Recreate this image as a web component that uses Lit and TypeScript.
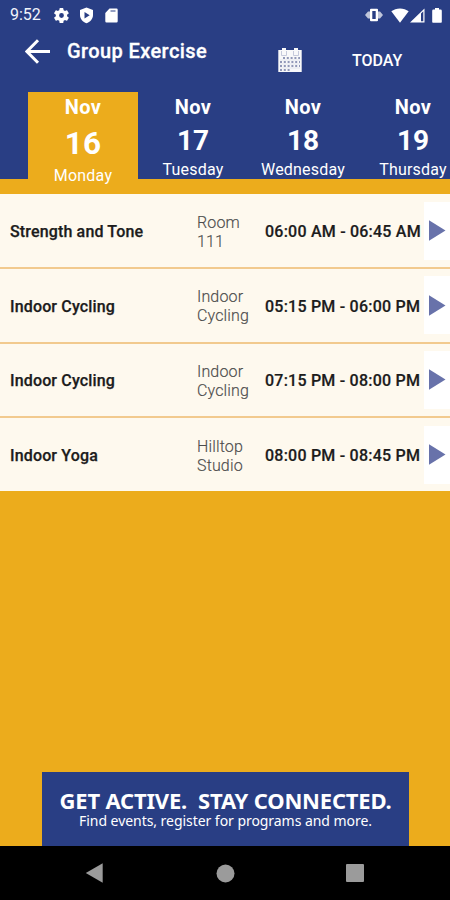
import { LitElement, html, css } from "lit";
import { customElement, state } from "lit/decorators.js";
import { classMap } from "lit/directives/class-map.js";

const days = [
  { month: "Nov", date: "16", name: "Monday" },
  { month: "Nov", date: "17", name: "Tuesday" },
  { month: "Nov", date: "18", name: "Wednesday" },
  { month: "Nov", date: "19", name: "Thursday" },
];

const classes = [
  { name: "Strength and Tone", room: ["Room", "111"], time: "06:00 AM - 06:45 AM" },
  { name: "Indoor Cycling", room: ["Indoor", "Cycling"], time: "05:15 PM - 06:00 PM" },
  { name: "Indoor Cycling", room: ["Indoor", "Cycling"], time: "07:15 PM - 08:00 PM" },
  { name: "Indoor Yoga", room: ["Hilltop", "Studio"], time: "08:00 PM - 08:45 PM" },
];

@customElement("status-bar")
class StatusBar extends LitElement {
  static styles = css`
    :host { display: flex; height: 30px; align-items: center; color: #f1f4fb; font-size: 16px; }
    .clock { width: 44px; padding-left: 10px; line-height: 30px; }
    svg { display: block; fill: #fff; }
    .shield { margin-left: 10px; }
    .card { margin-left: 11px; }
    .vibrate { margin-left: auto; }
    .wifi { margin-left: 8px; }
    .signal { margin-left: 1px; }
    .battery { margin: 0 8px 0 7px; }
  `;
  render() {
    return html`
      <div class="clock">9:52</div>
      <svg class="gear" width="15" height="15" viewBox="2 2 20 20"><path d="M19.4 13a7.500 7.500 0 0 0 0-2l2.100-1.600a.5.5 0 0 0 .1-.6l-2-3.500a.5.5 0 0 0-.6-.2l-2.500 1a7.300 7.300 0 0 0-1.700-1l-.4-2.600a.5.5 0 0 0-.5-.5h-4a.5.5 0 0 0-.5.500L9 5.100a7.300 7.300 0 0 0-1.700 1l-2.500-1a.5.5 0 0 0-.6.200l-2 3.500a.5.5 0 0 0 .1.600L4.500 11a7.500 7.500 0 0 0 0 2l-2.200 1.600a.5.5 0 0 0-.1.600l2 3.500c.1.200.4.300.6.200l2.500-1a7.300 7.300 0 0 0 1.700 1l.4 2.600c0 .3.200.500.500.500h4c.3 0 .5-.2.500-.5l.4-2.600a7.300 7.300 0 0 0 1.700-1l2.500 1c.2.100.5 0 .6-.2l2-3.500a.5.5 0 0 0-.1-.6zM12 15.200a3.200 3.200 0 1 1 0-6.400 3.200 3.200 0 0 1 0 6.400z"/></svg>
      <svg class="shield" width="15" height="17" viewBox="0 0 15 17"><path fill-rule="evenodd" d="M7.500 .5 14 3v5c0 4-3 7-6.500 8.200C4 15 1 12 1 8V3zM5.500 5v6.500L10.700 8.200z"/></svg>
      <svg class="card" width="13" height="15" viewBox="0 0 13 15"><path fill-rule="evenodd" d="M4.500.5H11.500a1.200 1.200 0 0 1 1.200 1.200v11.600a1.200 1.200 0 0 1-1.200 1.200H1.500A1.200 1.200 0 0 1 .3 13.300V5zM5.500 2.500v1h5v-1z"/></svg>
      <svg class="vibrate" width="18" height="14" viewBox="0 0 18 14"><path opacity=".7" d="M0 7l3-3.500h2v7H3zM18 7l-3-3.500h-2v7h2z"/><path fill-rule="evenodd" d="M6 .7h6a1 1 0 0 1 1 1v10.600a1 1 0 0 1-1 1H6a1 1 0 0 1-1-1V1.700a1 1 0 0 1 1-1zM7.300 3v8h3.400V3z"/></svg>
      <svg class="wifi" width="18" height="15" viewBox="0 0 18 15"><path d="M9 14.800.3 3.300C5-.6 13-.6 17.700 3.300z"/></svg>
      <svg class="signal" width="15" height="15" viewBox="0 0 15 15"><path fill-rule="evenodd" d="M14.500.5v14H0zM11 5.500v7.800h2.300V3.200z"/></svg>
      <svg class="battery" width="10" height="15" viewBox="0 0 10 15"><path d="M3 0h4v1.500h1.500a1.300 1.300 0 0 1 1.300 1.300V14a.8.8 0 0 1-.8.800H1a.8.8 0 0 1-.8-.8V2.800a1.300 1.300 0 0 1 1.300-1.300H3z"/></svg>
    `;
  }
}

@customElement("day-tab")
class DayTab extends LitElement {
  static properties = { day: { attribute: false }, active: { type: Boolean } };
  declare day: { month: string; date: string; name: string };
  declare active: boolean;
  static styles = css`
    :host { display: block; flex: none; width: 110px; }
    .tab { box-sizing: border-box; height: 102px; padding-top: 3px; text-align: center; color: #fff; }
    .active { background: #ecac1c; }
    .month { font-size: 20px; font-weight: 700; line-height: 24px; letter-spacing: 0.3px; }
    .date { font-size: 28px; font-weight: 700; line-height: 32px; margin-top: 6px; }
    .name { font-size: 16px; line-height: 20px; margin-top: 3px; letter-spacing: 0.2px; white-space: nowrap; }
    .active .date { font-size: 31.500px; line-height: 36px; margin-top: 7px; letter-spacing: 0.3px; }
    .active .name { margin-top: 4px; }
  `;
  render() {
    return html`<div class=${classMap({ tab: true, active: this.active })}>
      <div class="month">${this.day.month}</div>
      <div class="date">${this.day.date}</div>
      <div class="name">${this.day.name}</div>
    </div>`;
  }
}

@customElement("app-root")
class AppRoot extends LitElement {
  @state() selected = 0;
  static styles = css`
    :host { display: flex; flex-direction: column; width: 450px; height: 900px; overflow: hidden; background: #ecac1c; font-family: Roboto, sans-serif; }
    .header { background: linear-gradient(#293e84 179px, #ecac1c 179px); color: #fff; height: 194px; flex: none; }
    .bar { display: flex; height: 62px; }
    .back { margin: 9px 0 0 25px; }
    .title { margin: 8px 0 0 17px; width: 211px; font-size: 20px; font-weight: 500; line-height: 26px; letter-spacing: 0.4px; -webkit-text-stroke: 0.3px; }
    .calendar { margin-top: 17px; }
    .today { margin: 21px 0 0 50px; font-size: 16px; font-weight: 500; line-height: 20px; }
    svg { display: block; flex: none; }
    .days { display: flex; padding-left: 28px; overflow: hidden; }
    .list { flex: none; }
    .row { box-sizing: border-box; display: flex; align-items: center; height: 74.500px; padding-left: 10px; background: #fef9ee; border-bottom: 2px solid #f2ca8e; }
    .row:first-child { height: 75px; }
    .row:last-child { height: 73px; border: 0; }
    .name { width: 187px; font-size: 16px; font-weight: 500; color: #1c1c1c; letter-spacing: 0.15px; -webkit-text-stroke: 0.25px; padding-top: 2px; }
    .room { width: 68px; font-size: 16px; font-weight: 300; line-height: 19px; color: #4c4c4c; letter-spacing: 0.15px; padding-top: 2px; -webkit-text-stroke: 0.15px; }
    .time { width: 159px; font-size: 16px; font-weight: 500; color: #1c1c1c; white-space: nowrap; letter-spacing: 0.22px; padding-top: 2px; -webkit-text-stroke: 0.2px; }
    .play { width: 26px; height: 58px; background: #fff; display: flex; align-items: center; padding-left: 5px; box-sizing: border-box; }
    .banner { box-sizing: border-box; width: 367px; height: 74px; margin: auto 0 0 42px; padding-top: 14px; flex: none; background: #293e84; color: #fff; text-align: center; font-family: "Noto Sans", sans-serif; white-space: pre; }
    .slogan { font-size: 22px; font-weight: 700; line-height: 28px; letter-spacing: -0.2px; }
    .detail { font-size: 14px; line-height: 14px; letter-spacing: -0.05px; }
    .nav { height: 54px; flex: none; display: flex; align-items: center; background: #000; }
    .nav svg { fill: #9b9b9b; }
    .nav-back { margin-left: 85px; }
    .nav-home { margin-left: 113px; }
    .nav-recent { margin-left: 111px; }
  `;
  render() {
    return html`
      <div class="header">
        <status-bar></status-bar>
        <div class="bar">
          <svg class="back" width="25" height="25" viewBox="0 0 25 25" fill="none" stroke="#fff" stroke-width="3"><path d="M25 12.500H2M13 1.200 1.900 12.500 13 23.800"/></svg>
          <div class="title">Group Exercise</div>
          <svg class="calendar" width="24" height="26" viewBox="0 0 24 26">
            <rect x="0.300" y="3" width="23.400" height="22" fill="#f8f8fa"/>
            <path d="M4 1h4v6H4zM16 1h4v6h-4z" fill="#f8f8fa"/>
            <path d="M3.500 4v4.500h5V4M15.500 4v4.500h5V4" fill="none" stroke="#b7bdd4" stroke-width=".8"/>
            <path d="M5 11h17M2 15h20M2 19h20M2 23h10" stroke="#6f78a2" stroke-width="1.700" stroke-dasharray="2 1.800"/>
            <path d="M2 13h20M2 17h20M2 21h20" stroke="#d5d8e4" stroke-width=".6"/>
          </svg>
          <div class="today">TODAY</div>
        </div>
        <div class="days">
          ${days.map((d, i) => html`<day-tab .day=${d} ?active=${i === this.selected} @click=${() => (this.selected = i)}></day-tab>`)}
        </div>
      </div>
      <div class="list">
        ${classes.map((c) => html`<div class="row">
          <div class="name">${c.name}</div>
          <div class="room">${c.room[0]}<br />${c.room[1]}</div>
          <div class="time">${c.time}</div>
          <div class="play"><svg width="17" height="21" viewBox="0 0 17 21"><path d="M0 .3 16.500 10.500 0 20.700z" fill="#6872aa"/></svg></div>
        </div>`)}
      </div>
      <div class="banner"><div class="slogan">GET ACTIVE.  STAY CONNECTED.</div><div class="detail">Find events, register for programs and more.</div></div>
      <div class="nav">
        <svg class="nav-back" width="18" height="20" viewBox="0 0 18 20"><path d="M17.700 .3v19.400L.8 10z"/></svg>
        <svg class="nav-home" width="19" height="19" viewBox="0 0 19 19"><circle cx="9.500" cy="9.500" r="9"/></svg>
        <svg class="nav-recent" width="18" height="18" viewBox="0 0 18 18"><rect width="18" height="18" rx="1"/></svg>
      </div>
    `;
  }
}
